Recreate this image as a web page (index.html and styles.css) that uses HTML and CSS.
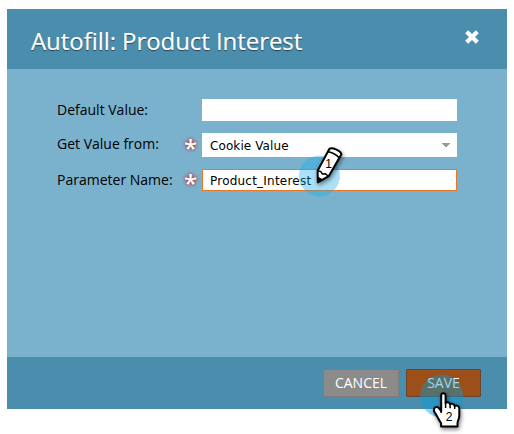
FILE: index.html
```html
<!DOCTYPE html>
<html lang="en">
<head>
<meta charset="utf-8">
<title>Autofill: Product Interest</title>
<link rel="stylesheet" href="styles.css">
</head>
<body>
<section class="dialog">
  <header class="dialog-header">
    <h1>Autofill: Product Interest</h1>
    <svg class="close" width="16" height="16" viewBox="0 0 16 16"><path d="M2.7 2.7L13.3 13.3M13.3 2.7L2.7 13.3"/></svg>
  </header>
  <div class="dialog-body">
    <div class="row row-default"><span class="label label-default">Default Value:</span><span class="required"></span><div class="field"></div></div>
    <div class="row row-select"><span class="label label-source">Get Value from:</span><span class="required">*</span><div class="field"><span class="value-source">Cookie Value</span><svg class="arrow" width="8" height="4" viewBox="0 0 8 4" shape-rendering="crispEdges"><path d="M0 0H8V1H7V2H6V3H5V4H3V3H2V2H1V1H0Z"/></svg></div></div>
    <div class="row row-name"><span class="label label-name">Parameter Name:</span><span class="required">*</span><div class="field focused"><span class="value-name">Product_Interest</span></div></div>
  </div>
  <footer class="dialog-footer">
    <div class="button cancel"><span>CANCEL</span></div>
    <div class="button save"><span>SAVE</span></div>
  </footer>
  <svg class="marker pencil" width="70" height="70" viewBox="290 135 70 70">
    <circle class="halo" cx="319.4" cy="176" r="20.5"/>
    <g class="shadowed">
      <path class="outline" d="M317.8 182.3L317.6 170.7L329.2 149.2C331.5 146.6 340.6 150.4 341.4 154.2L328.7 176.2Z"/>
      <path class="line" d="M327.5 151.8C331 151.7 337.4 155 339.3 158M317.9 170.8L320.8 171.6L322.4 174L325.4 173.8L328.2 176.2"/>
      <path class="tip" d="M317.7 183V176.5L323 179.6Z"/>
    </g>
    <text class="number" x="328.7" y="168" text-anchor="middle">1</text>
  </svg>
  <svg class="marker hand" width="70" height="64" viewBox="410 370 70 64">
    <circle class="halo deep" cx="441.7" cy="396" r="21.5"/>
    <g class="shadowed">
      <path class="outline" d="M441.1 426.5V423.2C438.8 420.3 437.7 416.8 434.8 412.7C432.8 409.6 434.3 406.6 437.3 407.1C439 407.4 440 409.7 441.2 411.3V395.5C441.2 392.5 445.4 392.5 445.6 395.5V403.2C446 401.7 449.8 402 450.1 404.3C450.9 403.1 454.4 403.7 454.7 406C456.2 404.8 459.3 406.1 459.3 408.7V416C459.3 419 457.5 420.2 457.5 423.2V426.5Z"/>
      <path class="line" d="M445.6 401.8V408M450.1 403.8V408.3M454.7 405.2V409M441.2 409V413"/>
    </g>
    <text class="number" x="449.2" y="421" text-anchor="middle">2</text>
  </svg>
</section>
</body>
</html>
```
FILE: styles.css
```css
* { box-sizing: border-box; }
body { margin: 0; height: 434px; padding: 9px 0 0 7px; background: #fff; font-family: "Open Sans", "Noto Sans", sans-serif; }
.dialog { position: relative; width: 500px; height: 400px; display: flex; flex-direction: column; background: #7ab2ce; }
.dialog-header { height: 60px; padding: 0 27px 0 24px; display: flex; justify-content: space-between; background: #4a8dad; }
h1 { margin: 0; padding-top: 15px; font-size: 24px; line-height: 34px; font-weight: 400; letter-spacing: -0.06px; color: #fff; text-shadow: 0 1px 1px #263d49; -webkit-text-stroke: .2px #fff; white-space: nowrap; }
.close { margin-top: 20px; fill: none; stroke: #fff; stroke-width: 4.2; }
.dialog-body { flex: 1; padding: 30px 50px 0; }
.row { display: flex; align-items: center; }
.row-default { height: 22px; }
.row-select { height: 24px; margin-top: 12px; }
.row-name { height: 22px; margin-top: 12px; }
.label { width: 124px; font-size: 14px; line-height: 20px; color: #000; white-space: nowrap; }
.label-source { padding-bottom: 2px; }
.required { width: 21px; height: 20px; padding-left: 3px; font-family: "Open Sans", sans-serif; font-size: 24px; line-height: 26px; font-weight: 600; color: #fff; text-shadow: 0 0 2px #b52a30, 0 0 4px #b52a30; }
.field { width: 255px; height: 100%; padding: 0 7px 0 8px; display: flex; align-items: center; justify-content: space-between; background: #fff; font-family: "DejaVu Sans", Verdana, sans-serif; font-size: 12px; line-height: 18px; color: #000; }
.focused { border: 1px solid #e77828; padding: 0 7px; }
.value-source { padding-top: 2px; letter-spacing: .1px; }
.value-name { padding-top: 2px; letter-spacing: .22px; }
.arrow { fill: #999; }
.dialog-footer { height: 52px; padding: 12px 26px 0 0; display: flex; justify-content: flex-end; gap: 7px; background: #4a8dad; }
.button { height: 28px; display: flex; align-items: center; justify-content: center; border: 1px solid; border-radius: 1px; font-size: 14px; line-height: 20px; color: #fff; }
.cancel { width: 76px; background: #8b8b8b; border-color: #827b78; }
.save { width: 75px; background: #9c4f18; border-color: #69452f; }
.marker { position: absolute; overflow: visible; }
.pencil { left: 283px; top: 126px; }
.hand { left: 403px; top: 361px; }
.halo { fill: #16a9e8; fill-opacity: .36; }
.deep { fill: #009fe0; fill-opacity: .42; }
.outline { fill: #fff; stroke: #000; stroke-width: 2; stroke-linejoin: round; }
.line { fill: none; stroke: #000; stroke-width: 1.5; }
.tip { fill: #000; }
.shadowed { filter: drop-shadow(1px 2px 2px rgba(0, 0, 0, .5)); }
.number { font: 12px "Liberation Sans", sans-serif; fill: #000; }
```
